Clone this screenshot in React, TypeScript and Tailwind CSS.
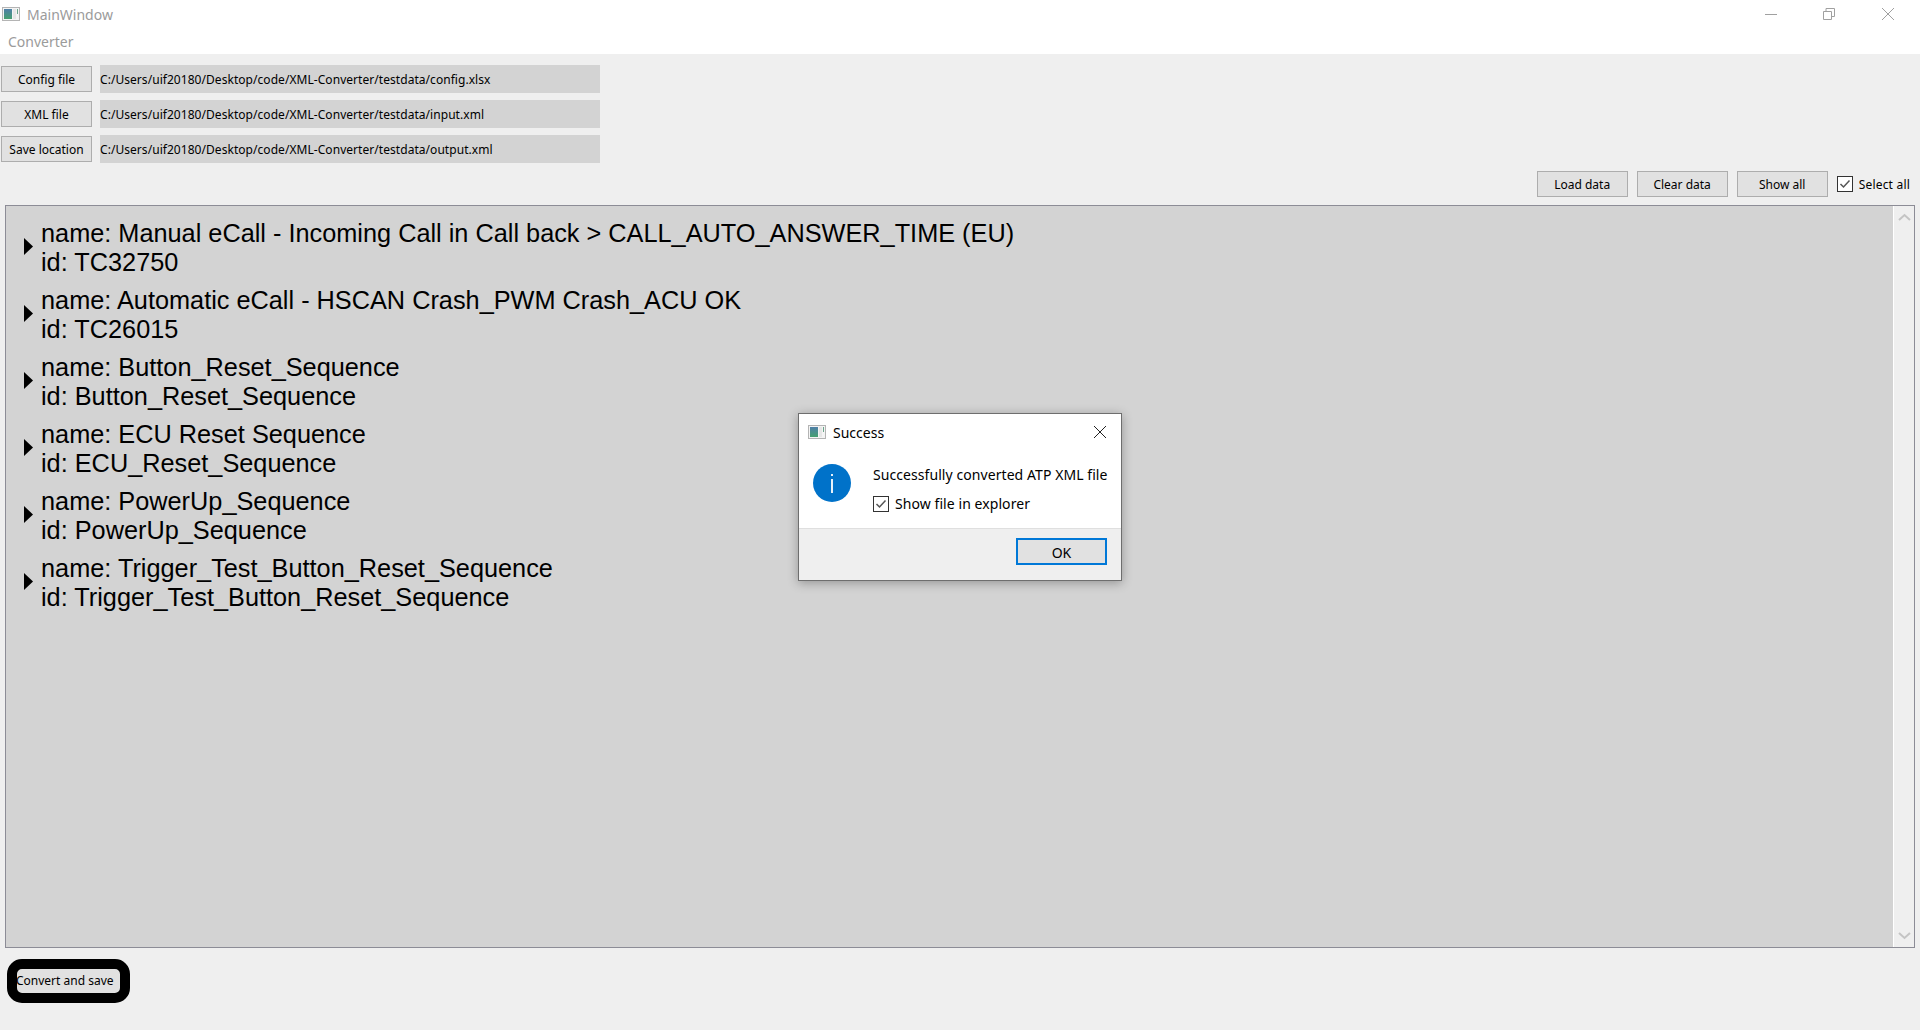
const uiFont = "[font-family:'Noto_Sans',sans-serif]";

const testCases = [
  { name: 'Manual eCall - Incoming Call in Call back > CALL_AUTO_ANSWER_TIME (EU)', id: 'TC32750' },
  { name: 'Automatic eCall - HSCAN Crash_PWM Crash_ACU OK', id: 'TC26015' },
  { name: 'Button_Reset_Sequence', id: 'Button_Reset_Sequence' },
  { name: 'ECU Reset Sequence', id: 'ECU_Reset_Sequence' },
  { name: 'PowerUp_Sequence', id: 'PowerUp_Sequence' },
  { name: 'Trigger_Test_Button_Reset_Sequence', id: 'Trigger_Test_Button_Reset_Sequence' },
];

const fileRows = [
  { label: 'Config file', path: 'C:/Users/uif20180/Desktop/code/XML-Converter/testdata/config.xlsx' },
  { label: 'XML file', path: 'C:/Users/uif20180/Desktop/code/XML-Converter/testdata/input.xml' },
  { label: 'Save location', path: 'C:/Users/uif20180/Desktop/code/XML-Converter/testdata/output.xml' },
];

function AppIcon() {
  return (
    <svg width="18" height="16" viewBox="0 0 18 16" className="shrink-0">
      <defs>
        <linearGradient id="pane" x1="0" y1="0" x2="0" y2="1">
          <stop offset="0" stopColor="#4f7fa8" />
          <stop offset="1" stopColor="#46a070" />
        </linearGradient>
      </defs>
      <rect x="0.5" y="1.5" width="17" height="13" fill="#f4f4f4" stroke="#b4b4b4" />
      <rect x="2" y="3" width="8" height="10" fill="url(#pane)" />
      <rect x="11" y="3" width="3" height="10" fill="#e6e6e6" />
      <rect x="15" y="3" width="1" height="5" fill="#6aa58a" />
    </svg>
  );
}

function CheckBox() {
  return (
    <span className="flex w-4 h-4 shrink-0 items-center justify-center bg-white border border-[#333]">
      <svg width="12" height="12" viewBox="0 0 12 12" fill="none" stroke="#555" strokeWidth="1.500">
        <path d="M1.500 6 4.500 9 10.500 2.500" />
      </svg>
    </span>
  );
}

function Btn({ label, className }: { label: string; className?: string }) {
  return (
    <button className={`h-[26px] pt-[1px] bg-[#e1e1e1] border border-[#adadad] text-[12px] text-black ${className ?? ''}`}>
      {label}
    </button>
  );
}

export default function App() {
  return (
    <div className={`relative w-[1920px] h-[1030px] flex flex-col bg-[#efefef] overflow-hidden ${uiFont}`}>
      <header className="h-[54px] shrink-0 bg-white flex flex-col">
        <div className="h-[29px] flex items-center pl-[2px]">
          <AppIcon />
          <span className="ml-[7px] text-[14px] text-[#9b9b9b]">MainWindow</span>
          <div className="ml-auto flex items-center">
            <svg width="12" height="12" viewBox="0 0 12 12" stroke="#a0a0a0" fill="none" className="mr-[46px]">
              <path d="M0 6.5H12" />
            </svg>
            <svg width="12" height="12" viewBox="0 0 12 12" stroke="#a0a0a0" fill="none" className="mr-[47px]">
              <path d="M.5 3.5h8v8h-8zM3 3.5V.5h8.500v8H8.500" />
            </svg>
            <svg width="12" height="12" viewBox="0 0 12 12" stroke="#a0a0a0" fill="none" className="mr-[26px]">
              <path d="M0 0 12 12M12 0 0 12" />
            </svg>
          </div>
        </div>
        <div className="pl-[8px] pt-[1px] text-[14px] leading-[25px] text-[#9b9b9b]">Converter</div>
      </header>

      <section className="pl-[1px] pt-[11px] flex flex-col gap-[7px]">
        {fileRows.map((row) => (
          <div key={row.label} className="flex items-center gap-[7px] h-[28px]">
            <Btn label={row.label} className="w-[91px] mr-[1px]" />
            <div className="w-[500px] h-[28px] bg-[#d3d3d3] text-[12px] tracking-[0.05px] text-black leading-[30px]">{row.path}</div>
          </div>
        ))}
      </section>

      <section className="h-[26px] mt-[8px] flex justify-end items-center gap-[9px] pr-[10px] shrink-0">
        <Btn label="Load data" className="w-[91px]" />
        <Btn label="Clear data" className="w-[91px]" />
        <Btn label="Show all" className="w-[91px]" />
        <label className="flex items-center gap-[6px] text-[12px] tracking-[0.2px] text-black">
          <CheckBox />
          <span className="pt-[2px]">Select all</span>
        </label>
      </section>

      <main className="mt-[8px] mx-[5px] h-[743px] shrink-0 flex bg-[#d3d3d3] border border-[#8c8c96]">
        <div className="flex-1 pt-[13px] pl-[18px] flex flex-col gap-[9px] font-['Liberation_Sans',sans-serif] text-[25.3px] leading-[29px] text-black">
          {testCases.map((t) => (
            <div key={t.id} className="flex items-center h-[58px]">
              <svg width="9" height="17" viewBox="0 0 9 17" className="shrink-0 -mt-[4px]">
                <path d="M0 0 9 8.500 0 17Z" fill="#000" />
              </svg>
              <div className="ml-[8px] whitespace-nowrap">
                <div>name: {t.name}</div>
                <div>id: {t.id}</div>
              </div>
            </div>
          ))}
        </div>
        <div className="w-[21px] shrink-0 bg-[#efefef] border-l border-white flex flex-col justify-between items-center py-[7px]">
          <svg width="13" height="8" viewBox="0 0 13 8" fill="none" stroke="#c4c4c4" strokeWidth="2">
            <path d="M1 7 6.500 2 12 7" />
          </svg>
          <svg width="13" height="8" viewBox="0 0 13 8" fill="none" stroke="#c4c4c4" strokeWidth="2">
            <path d="M1 1 6.500 6 12 1" />
          </svg>
        </div>
      </main>

      <footer className="pl-[7px] pt-[11px]">
        <button className="w-[123px] h-[44px] bg-[#e1e1e1] border-[10px] border-black rounded-[15px] text-[12px] text-black whitespace-nowrap flex items-center justify-start">
          <span className="-ml-[1px]">Convert and save</span>
        </button>
      </footer>

      <div className="absolute left-[798px] top-[413px] w-[324px] h-[168px] flex flex-col bg-white border border-[#6e6e6e] shadow-[0_2px_10px_rgba(0,0,0,0.3)]">
        <div className="h-[36px] shrink-0 flex items-center pl-[9px] pr-[15px]">
          <AppIcon />
          <span className="ml-[7px] text-[14px] text-black">Success</span>
          <svg width="12" height="12" viewBox="0 0 12 12" stroke="#222" fill="none" className="ml-auto">
            <path d="M0 0 12 12M12 0 0 12" />
          </svg>
        </div>
        <div className="flex-1 flex pl-[14px] pt-[14px]">
          <svg width="38" height="38" viewBox="0 0 38 38" className="shrink-0">
            <circle cx="19" cy="19" r="19" fill="#0072c9" />
            <path d="M19 10v2M19 15v14" stroke="#fff" strokeWidth="1.800" />
          </svg>
          <div className="ml-[22px] mt-[1px] text-[14px] tracking-[0.07px] text-black">
            <div className="leading-[20px]">Successfully converted ATP XML file</div>
            <label className="mt-[9px] flex items-center gap-[6px] leading-[20px]">
              <CheckBox />
              Show file in explorer
            </label>
          </div>
        </div>
        <div className="h-[52px] shrink-0 bg-[#efefef] border-t border-[#dfdfdf] flex justify-end items-start pt-[9px] pr-[14px]">
          <button className="w-[91px] h-[27px] pt-[1px] bg-[#e1e1e1] border-2 border-[#0078d7] text-[14px] text-black">OK</button>
        </div>
      </div>
    </div>
  );
}
